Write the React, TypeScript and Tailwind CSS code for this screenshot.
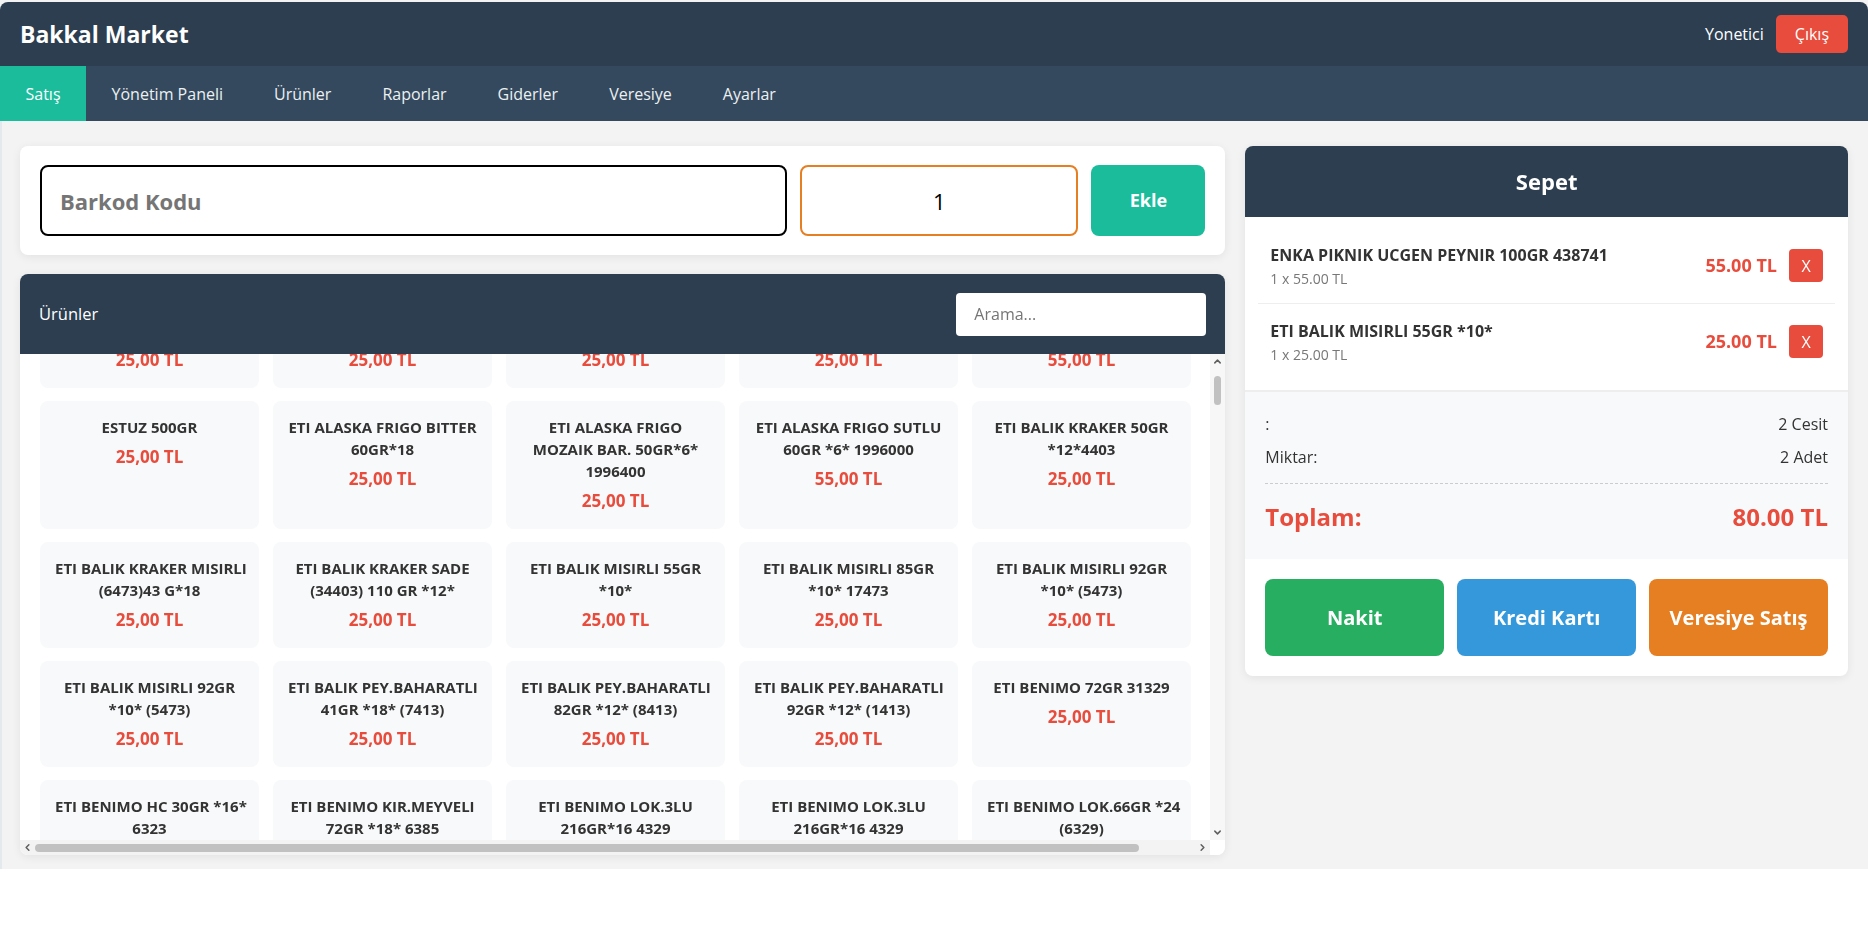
import { useEffect, useRef } from 'react'

type Product = { lines: string[]; price: string }

const NAV_ITEMS = ['Satış', 'Yönetim Paneli', 'Ürünler', 'Raporlar', 'Giderler', 'Veresiye', 'Ayarlar']

const VISIBLE_PRODUCTS: Product[] = [
  { lines: ['ERIKLI SU 0.5 LT', '*12* 10045'], price: '25,00 TL' },
  { lines: ['ERIKLI SU 1.5 LT', '*6* 10046'], price: '25,00 TL' },
  { lines: ['ESTUZ 1 KG', 'SOFRA TUZU'], price: '25,00 TL' },
  { lines: ['ESTUZ 750GR', 'IYOTLU *12*'], price: '25,00 TL' },
  { lines: ['ENKA PIKNIK UCGEN', 'PEYNIR 100GR 438741'], price: '55,00 TL' },

  { lines: ['ESTUZ 500GR'], price: '25,00 TL' },
  { lines: ['ETI ALASKA FRIGO BITTER', '60GR*18'], price: '25,00 TL' },
  { lines: ['ETI ALASKA FRIGO', 'MOZAIK BAR. 50GR*6*', '1996400'], price: '25,00 TL' },
  { lines: ['ETI ALASKA FRIGO SUTLU', '60GR *6* 1996000'], price: '55,00 TL' },
  { lines: ['ETI BALIK KRAKER 50GR', '*12*4403'], price: '25,00 TL' },

  { lines: ['ETI BALIK KRAKER MISIRLI', '(6473)43 G*18'], price: '25,00 TL' },
  { lines: ['ETI BALIK KRAKER SADE', '(34403) 110 GR *12*'], price: '25,00 TL' },
  { lines: ['ETI BALIK MISIRLI 55GR', '*10*'], price: '25,00 TL' },
  { lines: ['ETI BALIK MISIRLI 85GR', '*10* 17473'], price: '25,00 TL' },
  { lines: ['ETI BALIK MISIRLI 92GR', '*10* (5473)'], price: '25,00 TL' },

  { lines: ['ETI BALIK MISIRLI 92GR', '*10* (5473)'], price: '25,00 TL' },
  { lines: ['ETI BALIK PEY.BAHARATLI', '41GR *18* (7413)'], price: '25,00 TL' },
  { lines: ['ETI BALIK PEY.BAHARATLI', '82GR *12* (8413)'], price: '25,00 TL' },
  { lines: ['ETI BALIK PEY.BAHARATLI', '92GR *12* (1413)'], price: '25,00 TL' },
  { lines: ['ETI BENIMO 72GR 31329'], price: '25,00 TL' },

  { lines: ['ETI BENIMO HC 30GR *16*', '6323'], price: '25,00 TL' },
  { lines: ['ETI BENIMO KIR.MEYVELI', '72GR *18* 6385'], price: '25,00 TL' },
  { lines: ['ETI BENIMO LOK.3LU', '216GR*16 4329'], price: '25,00 TL' },
  { lines: ['ETI BENIMO LOK.3LU', '216GR*16 4329'], price: '25,00 TL' },
  { lines: ['ETI BENIMO LOK.66GR *24', '(6329)'], price: '25,00 TL' },
]

// a few more rows below the fold
const BRANDS = ['ETI BISKREM', 'ETI BURCAK', 'ETI CIN', 'ETI CRAX', 'ETI DAMAK', 'ETI FORM', 'ETI GONG', 'ETI HOSBES', 'ETI KARAM', 'ETI PETITO']
const FILLER: Product[] = Array.from({ length: 10 }, (_, i) => ({
  lines: [`${BRANDS[i]} ${30 + ((i * 7) % 90)}GR`, `*${6 + (i % 4) * 6}* ${4000 + i * 13}`],
  price: '25,00 TL',
}))

const PRODUCTS = [...VISIBLE_PRODUCTS, ...FILLER]

const CART = [
  { name: 'ENKA PIKNIK UCGEN PEYNIR 100GR 438741', qty: 1, price: '55.00' },
  { name: 'ETI BALIK MISIRLI 55GR *10*', qty: 1, price: '25.00' },
]

function Chevron({ dir }: { dir: 'up' | 'down' | 'left' | 'right' }) {
  const d = {
    up: 'M2 6.5 L5 3.5 L8 6.5',
    down: 'M2 3.5 L5 6.5 L8 3.5',
    left: 'M6.5 2 L3.5 5 L6.5 8',
    right: 'M3.5 2 L6.5 5 L3.5 8',
  }[dir]
  return (
    <svg width="9" height="9" viewBox="0 0 10 10">
      <path d={d} fill="none" stroke="#606060" strokeWidth="1.7" strokeLinecap="round" strokeLinejoin="round" />
    </svg>
  )
}

function ProductCard({ product }: { product: Product }) {
  return (
    <div className="bg-[#f8f9fa] rounded-lg p-[15px] text-center">
      {product.lines.map((line, i) => (
        <div key={i} className="text-[15px] leading-[22px] font-bold text-[#333] whitespace-nowrap">
          {line}
        </div>
      ))}
      <div className="mt-[5px] text-[17px] leading-[27px] font-bold text-[#e74c3c]">{product.price}</div>
    </div>
  )
}

export default function App() {
  const listRef = useRef<HTMLDivElement>(null)

  useEffect(() => {
    if (listRef.current) listRef.current.scrollTop = 92
  }, [])

  return (
    <div className="bg-[#f3f3f3] pt-[2px] text-[#333]" style={{ fontFamily: '"Open Sans", "Noto Sans", sans-serif' }}>
      {/* Header */}
      <header className="h-[64px] bg-[#2c3e50] rounded-t-lg flex items-center justify-between px-5">
        <h1 className="text-[23px] font-bold text-white">Bakkal Market</h1>
        <div className="flex items-center gap-3">
          <span className="text-[16px] text-white">Yonetici</span>
          <button className="h-[38px] px-[19px] rounded-[5px] bg-[#e74c3c] text-white text-[16px]">Çıkış</button>
        </div>
      </header>

      {/* Navigation */}
      <nav className="h-[55px] bg-[#34495e] flex">
        {NAV_ITEMS.map((item, i) => (
          <a
            key={item}
            className={`flex items-center px-[25.5px] text-[16px] ${i === 0 ? 'bg-[#1abc9c] text-white' : 'text-[#ecf0f1]'}`}
          >
            {item}
          </a>
        ))}
      </nav>

      <main className="grid grid-cols-[2fr_1fr] gap-5 items-start pl-[18px] pr-5 pt-[25px] pb-[14px] border-l-2 border-[#e4e9ee]">
        {/* Left column */}
        <div className="flex flex-col gap-[19px] min-w-0">
          <div className="bg-white rounded-lg shadow-[0_2px_10px_rgba(0,0,0,0.07)] px-5 py-[19px] flex gap-[13px]">
            <input
              autoFocus
              placeholder="Barkod Kodu"
              className="flex-1 min-w-0 h-[71px] border-2 border-black rounded-lg px-[18px] text-[22px] font-bold outline-none placeholder:text-[#757575]"
            />
            <input
              defaultValue="1"
              className="w-[278px] h-[71px] border-2 border-[#e67e22] rounded-lg text-center text-[22px] text-black outline-none"
            />
            <button className="w-[114px] h-[71px] rounded-lg bg-[#1abc9c] text-white text-[18px] font-bold">Ekle</button>
          </div>

          <div className="bg-white rounded-lg shadow-[0_2px_10px_rgba(0,0,0,0.07)] overflow-hidden">
            <div className="h-[80px] bg-[#2c3e50] flex items-center justify-between px-[19px]">
              <span className="text-white text-[16.5px]">Ürünler</span>
              <input
                placeholder="Arama..."
                className="w-[250px] h-[43px] bg-white rounded px-[18px] text-[16px] outline-none placeholder:text-[#757575]"
              />
            </div>

            {/* product list with its scrollbars */}
            <div className="flex flex-col h-[501px]">
              <div className="flex flex-1 min-h-0">
                <div ref={listRef} className="flex-1 min-w-0 overflow-hidden">
                  <div className="w-[1250px] pl-5 pr-[79px] py-5 grid grid-cols-[repeat(5,219px)] gap-x-[14px] gap-y-[13px]">
                    {PRODUCTS.map((p, i) => (
                      <ProductCard key={i} product={p} />
                    ))}
                  </div>
                </div>
                <div className="w-[15px] bg-[#f7f7f7] flex flex-col items-center">
                  <div className="h-[15px] flex items-center justify-center"><Chevron dir="up" /></div>
                  <div className="flex-1">
                    <div className="mt-[7px] w-[7px] h-[29px] rounded-full bg-[#c1c1c1]" />
                  </div>
                  <div className="h-[15px] flex items-center justify-center"><Chevron dir="down" /></div>
                </div>
              </div>
              <div className="h-[15px] flex">
                <div className="flex-1 bg-[#f3f3f3] flex items-center">
                  <div className="w-[15px] flex items-center justify-center"><Chevron dir="left" /></div>
                  <div className="flex-1">
                    <div className="w-[1104px] h-[8px] rounded-full bg-[#c1c1c1]" />
                  </div>
                  <div className="w-[15px] flex items-center justify-center"><Chevron dir="right" /></div>
                </div>
                <div className="w-[15px] bg-white" />
              </div>
            </div>
          </div>
        </div>

        {/* Cart */}
        <div className="bg-white rounded-lg shadow-[0_2px_10px_rgba(0,0,0,0.07)] overflow-hidden">
          <div className="h-[71px] bg-[#2c3e50] flex items-center justify-center">
            <h2 className="text-white text-[22px] font-bold">Sepet</h2>
          </div>

          <div className="py-[11px] px-[13px]">
            {CART.map((item, i) => (
              <div
                key={i}
                className={`flex items-center justify-between px-3 py-[15px] ${i < CART.length - 1 ? 'border-b border-[#eee]' : ''}`}
              >
                <div>
                  <div className="text-[16px] leading-[24px] font-bold text-[#333]">{item.name}</div>
                  <div className="mt-[3px] text-[14px] leading-[18px] text-[#777]">
                    {item.qty} x {item.price} TL
                  </div>
                </div>
                <div className="flex items-center gap-[12px]">
                  <span className="text-[18px] font-bold text-[#e74c3c]">{item.price} TL</span>
                  <button className="w-[34px] h-[33px] rounded bg-[#e74c3c] text-white text-[16px]">X</button>
                </div>
              </div>
            ))}
          </div>

          <div className="bg-[#f8f9fa] border-t-2 border-[#eee] px-5 pt-5 pb-[24px]">
            <div className="flex justify-between text-[16px] leading-[24px] mb-[9px]">
              <span>:</span>
              <span>2 Cesit</span>
            </div>
            <div className="flex justify-between text-[16px] leading-[24px]">
              <span>Miktar:</span>
              <span>2 Adet</span>
            </div>
            <div className="mt-[14px] pt-[15px] border-t border-dashed border-[#ccc] flex justify-between text-[24px] leading-[36px] font-bold text-[#e74c3c]">
              <span>Toplam:</span>
              <span>80.00 TL</span>
            </div>
          </div>

          <div className="grid grid-cols-3 gap-[13px] p-5">
            <button className="h-[77px] rounded-lg bg-[#27ae60] text-white text-[20px] font-bold">Nakit</button>
            <button className="h-[77px] rounded-lg bg-[#3498db] text-white text-[20px] font-bold">Kredi Kartı</button>
            <button className="h-[77px] rounded-lg bg-[#e67e22] text-white text-[20px] font-bold">Veresiye Satış</button>
          </div>
        </div>
      </main>
    </div>
  )
}
